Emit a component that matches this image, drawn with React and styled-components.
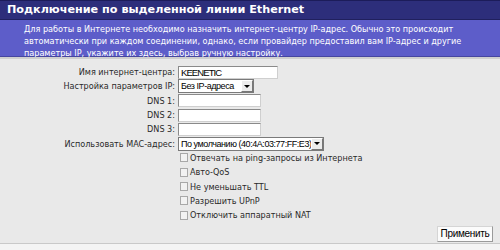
import React from "react";
import styled, { createGlobalStyle } from "styled-components";

const Global = createGlobalStyle`
  html, body { margin: 0; padding: 0; background: #f4f4f4; }
  body { width: 500px; height: 250px; overflow: hidden; font-family: "DejaVu Sans Condensed", "DejaVu Sans", Verdana, sans-serif; }
`;

const arial = `"Liberation Sans", Arial, sans-serif`;

const Page = styled.div`
  width: 500px;
  height: 250px;
  display: flex;
  flex-direction: column;
  background: #f4f4f4;
`;

const Title = styled.div`
  height: 20px;
  box-sizing: border-box;
  background: #2d2e7b;
  border-top: 1px solid #1c1c5a;
  border-bottom: 1px solid #20205e;
  color: #fff;
  font: bold 11.2px "DejaVu Sans", Verdana, sans-serif;
  padding: 2px 0 0 7px;
  white-space: nowrap;
`;

const Desc = styled.div`
  height: 37px;
  box-sizing: border-box;
  background: #5d5dc9;
  border-bottom: 1px solid #4646a0;
  color: #fff;
  font-size: 9px;
  line-height: 12px;
  padding: 3px 0 0 24px;
  white-space: nowrap;
`;

const Body = styled.div`
  flex: none;
  height: 187px;
  box-sizing: border-box;
  background: #e9e9e9;
  border-top: 2px solid #cfcfcf;
  border-bottom: 1px solid #c9c9c9;
  position: relative;
  padding-top: 6px;
`;

const Row = styled.div`
  display: flex;
  align-items: center;
  height: 14.3px;
`;

const Label = styled.div`
  width: 178px;
  text-align: right;
  padding-right: 3px;
  box-sizing: border-box;
  font-size: 9px;
  color: #2a2a2a;
  white-space: nowrap;
`;

const Input = styled.div`
  width: ${p => p.w}px;
  height: 13px;
  box-sizing: border-box;
  background: #fff;
  border: 1px solid #8a8a8a;
  border-right-color: #cfcfcf;
  border-bottom-color: #cfcfcf;
  font: 9.5px ${arial};
  letter-spacing: -0.9px;
  line-height: 11px;
  padding-left: 2px;
  color: #000;
`;

const Select = styled.div`
  width: ${p => p.w}px;
  height: 14px;
  box-sizing: border-box;
  background: #fff;
  border: 1px solid #7a7a7a;
  display: flex;
  align-items: center;
  font: 9px ${arial};
  letter-spacing: -0.45px;
  color: #000;
  padding-left: 2px;
  white-space: nowrap;
  overflow: hidden;
`;

const SelectText = styled.span`
  flex: 1;
  overflow: hidden;
`;

const Arrow = styled.div`
  width: 12px;
  height: 12px;
  flex: none;
  box-sizing: border-box;
  background: #ececec;
  border: 1px solid #fff;
  border-right-color: #777;
  border-bottom-color: #777;
  display: flex;
  align-items: center;
  justify-content: center;
  &::after {
    content: "";
    border-left: 3px solid transparent;
    border-right: 3px solid transparent;
    border-top: 3px solid #000;
  }
`;

const CheckRow = styled.div`
  display: flex;
  align-items: center;
  height: 14.3px;
  padding-left: 180px;
  font-size: 9px;
  color: #2a2a2a;
  white-space: nowrap;
`;

const Box = styled.span`
  width: 8px;
  height: 9px;
  box-sizing: border-box;
  background: #f2f2f2;
  border: 1px solid #a8a8a8;
  margin-right: 2px;
`;

const Footer = styled.div`
  position: absolute;
  right: 7px;
  bottom: 1px;
`;

const Button = styled.div`
  width: 56px;
  height: 16px;
  box-sizing: border-box;
  background: #fbfbfb;
  border: 1px solid #9a9a9a;
  border-top-color: #d5d5d5;
  border-left-color: #d5d5d5;
  font: 10px ${arial};
  letter-spacing: -0.3px;
  text-align: center;
  line-height: 14px;
  color: #000;
`;

const fields = [
  { label: "Имя интернет-центра:", kind: "input", w: 100, value: "KEENETIC" },
  { label: "Настройка параметров IP:", kind: "select", w: 76, value: "Без IP-адреса" },
  { label: "DNS 1:", kind: "input", w: 83, value: "" },
  { label: "DNS 2:", kind: "input", w: 83, value: "" },
  { label: "DNS 3:", kind: "input", w: 83, value: "" },
  { label: "Использовать MAC-адрес:", kind: "select", w: 146, value: "По умолчанию (40:4A:03:77:FF:E3)" },
];

const checks = [
  "Отвечать на ping-запросы из Интернета",
  "Авто-QoS",
  "Не уменьшать TTL",
  "Разрешить UPnP",
  "Отключить аппаратный NAT",
];

export default function App() {
  return (
    <Page>
      <Global />
      <Title>Подключение по выделенной линии Ethernet</Title>
      <Desc>
        Для работы в Интернете необходимо назначить интернет-центру IP-адрес. Обычно это происходит
        <br />
        автоматически при каждом соединении, однако, если провайдер предоставил вам IP-адрес и другие
        <br />
        параметры IP, укажите их здесь, выбрав ручную настройку.
      </Desc>
      <Body>
        {fields.map(f => (
          <Row key={f.label}>
            <Label>{f.label}</Label>
            {f.kind === "input" ? (
              <Input w={f.w}>{f.value}</Input>
            ) : (
              <Select w={f.w}>
                <SelectText>{f.value}</SelectText>
                <Arrow />
              </Select>
            )}
          </Row>
        ))}
        {checks.map(c => (
          <CheckRow key={c}>
            <Box />
            {c}
          </CheckRow>
        ))}
        <Footer>
          <Button>Применить</Button>
        </Footer>
      </Body>
    </Page>
  );
}
